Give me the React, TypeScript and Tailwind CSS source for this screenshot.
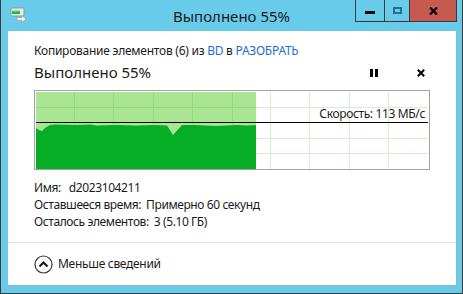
import React from "react";

const font = { fontFamily: '"Noto Sans", "Open Sans", sans-serif' };

function TitleIcon() {
  return (
    <svg width="18" height="16" viewBox="0 0 18 16" className="block">
      <rect x="1" y="1" width="13" height="8" rx="1.5" fill="#e8eef0" stroke="#8a9aa0" />
      <rect x="2" y="3" width="8" height="4" fill="#1eb83a" />
      <rect x="2" y="3" width="8" height="1.5" fill="#8ee89a" />
      <path d="M7 10.5h5V8.5l4 3.5-4 3.5v-2H7z" fill="#f4f4f4" stroke="#9aa4a8" strokeWidth="0.8" />
    </svg>
  );
}

function SpeedChart() {
  const cols = [38, 77, 117, 156, 196, 234, 273, 313, 352];
  const rows = [15, 30, 46, 61];
  const area =
    "M0,77 L0,36 L3,38 L6,39 L9,36 L14,33 L20,32.5 L40,33 L55,32.5 L60,33.5 L80,33 L100,33.5 L120,33 L131,33.5 L137,43 L146,33 L160,33 L170,33.5 L180,34 L200,33 L212,33.5 L220,33 L220,77 Z";
  return (
    <svg width="392" height="77" viewBox="0 0 392 77" className="block">
      <rect width="392" height="77" fill="#ffffff" />
      {cols.map((x) => (
        <rect key={"c" + x} x={x} y="0" width="1" height="77" fill="#d3f0cf" />
      ))}
      {rows.map((y) => (
        <rect key={"r" + y} x="0" y={y} width="392" height="1" fill="#d3f0cf" />
      ))}
      <rect x="0" y="0" width="220" height="77" fill="#a9e593" />
      {cols
        .filter((x) => x < 220)
        .map((x) => (
          <rect key={"g" + x} x={x} y="0" width="1" height="77" fill="#90db7a" />
        ))}
      {rows.map((y) => (
        <rect key={"h" + y} x="0" y={y} width="220" height="1" fill="#90db7a" />
      ))}
      <path d={area} fill="#06ae25" />
      <rect x="0" y="30" width="392" height="1" fill="#000000" />
    </svg>
  );
}

export default function App() {
  return (
    <div
      className="w-[463px] h-[294px] bg-[#69cbea] border-x border-b border-[#3a3a3a] flex flex-col relative overflow-hidden"
      style={font}
    >
      {/* title bar */}
      <div className="h-[31px] shrink-0 flex items-center pl-[9px] relative">
        <div className="-mt-[2px]">
          <TitleIcon />
        </div>
        <div className="absolute inset-x-0 top-[6px] text-center text-[15px] leading-[20px] text-[#1b1b1b]">
          Выполнено 55%
        </div>
        <div className="absolute right-[5px] top-0 flex h-[22px] border border-t-0 border-[#3a3a3a]">
          <div className="w-[29px] flex items-center justify-center border-r border-[#3a3a3a]">
            <div className="w-[10px] h-[3px] bg-black mt-[3px]" />
          </div>
          <div className="w-[25px] flex items-center justify-center border-r border-[#3a3a3a]">
            <div className="w-[9px] h-[7px] border-2 border-[#286e8e]" />
          </div>
          <div className="w-[46px] bg-[#c75a50] flex items-center justify-center">
            <svg width="9" height="8" viewBox="0 0 9 8">
              <path d="M1 0.5l7 7M8 0.5l-7 7" stroke="#000" strokeWidth="2.2" />
            </svg>
          </div>
        </div>
      </div>

      {/* white panel */}
      <div className="flex-1 mx-[6px] ml-[7px] mb-[8px] bg-white flex flex-col shadow-[1px_1px_0_#8fb8c8]">
        <div className="pl-[26px] pr-[26px] pt-[12px] flex flex-col">
          <div className="text-[12px] leading-[16px] text-[#1b1b1b] tracking-[-0.25px]">
            Копирование элементов (6) из <span className="text-[#1e6fd0]">BD</span> в{" "}
            <span className="text-[#1e6fd0]">РАЗОБРАТЬ</span>
          </div>
          <div className="flex items-center mt-[3px] h-[20px]">
            <div className="text-[15px] leading-[20px] text-[#1b1b1b] flex-1">Выполнено 55%</div>
            <div className="flex gap-[2px] mr-[39px] mt-[1px]">
              <div className="w-[3px] h-[8px] bg-black" />
              <div className="w-[3px] h-[8px] bg-black" />
            </div>
            <svg width="8" height="8" viewBox="0 0 8 8" className="mr-[5px] mt-[1px]">
              <path d="M0.8 0.8l6.4 6.4M7.2 0.8l-6.4 6.4" stroke="#000" strokeWidth="2" />
            </svg>
          </div>
          <div className="mt-[8px] w-[396px] h-[80px] border border-[#a3a3a3] p-[1px] relative">
            <SpeedChart />
            <div className="absolute right-[4px] top-[15px] text-[12px] leading-[16px] text-[#1b1b1b] tracking-[-0.35px]">
              Скорость: 113 МБ/с
            </div>
          </div>
          <div className="mt-[9px] text-[12px] leading-[17px] text-[#1b1b1b] tracking-[-0.4px] flex flex-col">
            <div>
              Имя:<span className="ml-[8px]">d2023104211</span>
            </div>
            <div>
              Оставшееся время:<span className="ml-[5px]">Примерно 60 секунд</span>
            </div>
            <div>
              Осталось элементов:<span className="ml-[5px]">3 (5.10 ГБ)</span>
            </div>
          </div>
        </div>
        <div className="mt-[12px] border-t border-[#e3e3e3]" />
        <div className="flex-1 flex items-center pl-[26px] gap-[5px]">
          <svg width="19" height="19" viewBox="0 0 19 19">
            <circle cx="9.5" cy="9.5" r="8.5" fill="none" stroke="#3a3a3a" strokeWidth="1.2" />
            <path d="M5.5 11.5l4-4 4 4" fill="none" stroke="#1b1b1b" strokeWidth="2.2" />
          </svg>
          <div className="text-[12px] leading-[18px] text-[#1b1b1b] tracking-[-0.3px]">Меньше сведений</div>
        </div>
      </div>
    </div>
  );
}
